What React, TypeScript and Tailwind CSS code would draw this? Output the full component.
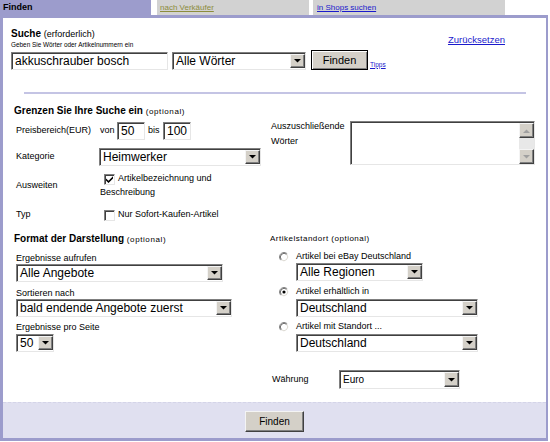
import React from "react";

const sunken =
  "bg-white border border-t-[#7f7f7f] border-l-[#7f7f7f] border-b-[#e6e6e6] border-r-[#e6e6e6] shadow-[inset_1px_1px_0_#404040]";

const raised =
  "bg-[#d4d0c8] border border-t-[#f4f4f4] border-l-[#f4f4f4] border-b-[#404040] border-r-[#404040] shadow-[inset_-1px_-1px_0_#808080]";

function DownArrow({ color = "#000" }: { color?: string }) {
  return (
    <svg width="7" height="4" viewBox="0 0 7 4">
      <path d="M0 0H7L3.5 3.6Z" fill={color} />
    </svg>
  );
}

function UpArrow({ color = "#000" }: { color?: string }) {
  return (
    <svg width="7" height="4" viewBox="0 0 7 4">
      <path d="M3.5 0.4L7 4H0Z" fill={color} />
    </svg>
  );
}

function Field({ value, className }: { value: string; className: string }) {
  return (
    <div className={`flex items-center pl-[3px] text-[12px] leading-none ${sunken} ${className}`}>
      {value}
    </div>
  );
}

function Select({
  value,
  className,
  text = "text-[12px]",
}: {
  value: string;
  className: string;
  text?: string;
}) {
  return (
    <div className={`flex items-stretch ${sunken} ${className}`}>
      <span className={`flex flex-1 items-center pl-[3px] leading-none ${text}`}>{value}</span>
      <span className={`my-[1px] mr-[0px] flex w-[15px] items-center justify-center ${raised}`}>
        <DownArrow />
      </span>
    </div>
  );
}

function TextArea() {
  return (
    <div className={`flex h-[44px] w-[185px] ${sunken}`}>
      <div className="flex-1" />
      <div className="mt-[1px] flex w-[15px] flex-col bg-[#e8e8e8]">
        <span className={`flex h-[15px] items-center justify-center ${raised}`}>
          <UpArrow color="#a0a0a0" />
        </span>
        <div className="flex-1" />
        <span className={`flex h-[15px] items-center justify-center ${raised}`}>
          <DownArrow color="#a0a0a0" />
        </span>
      </div>
    </div>
  );
}

function Check({ checked }: { checked?: boolean }) {
  return (
    <div className={`flex h-[11px] w-[11px] items-center justify-center ${sunken}`}>
      {checked && (
        <svg width="7" height="7" viewBox="0 0 7 7">
          <path d="M0 2.4L2.5 4.8L7 0.3V2.6L2.5 7L0 4.6Z" fill="#000" />
        </svg>
      )}
    </div>
  );
}

function Radio({ on }: { on?: boolean }) {
  return (
    <svg width="10" height="10" viewBox="0 0 12 12">
      <circle cx="6" cy="6" r="5.5" fill="#fff" />
      <path d="M2.11 9.89A5.5 5.5 0 0 1 9.89 2.11" stroke="#808080" strokeWidth="1" fill="none" />
      <path d="M2.82 9.18A4.5 4.5 0 0 1 9.18 2.82" stroke="#404040" strokeWidth="1" fill="none" />
      <path d="M9.18 2.82A4.5 4.5 0 0 1 2.82 9.18" stroke="#d4d0c8" strokeWidth="1" fill="none" />
      {on && <circle cx="6" cy="6" r="1.9" fill="#000" />}
    </svg>
  );
}

export default function App() {
  return (
    <div className="h-[442px] w-[550px] overflow-hidden bg-white font-['Liberation_Sans',Arial,sans-serif] text-black">
      {/* tabs */}
      <div className="flex h-[15px]">
        <div className="flex w-[151px] items-center bg-[#9c9ccc] pl-[3px] text-[9px] font-bold leading-none">
          Finden
        </div>
        <div className="ml-[6px] flex w-[152px] items-center bg-[#d2d2d2] pl-[3px] text-[8px] leading-none">
          <a className="text-[#8c8c3c] underline">nach Verkäufer</a>
        </div>
        <div className="ml-[4px] flex w-[192px] items-center bg-[#d2d2d2] pl-[4px] text-[8px] leading-none">
          <a className="text-[#1a1acc] underline">in Shops suchen</a>
        </div>
      </div>

      <div className="flex h-[426px] w-[548px] flex-col border-[#9c9ccc] border-t-[3px] border-l-[3px] border-r-[2px] border-b-[3px]">
        <div className="h-[384px]">
          {/* Suche */}
          <div className="flex">
            <div className="ml-[8px] flex flex-col">
              <div className="mt-[10px] h-[12px] text-[10px] leading-[12px]">
                <b>Suche</b> <span className="text-[9px]">(erforderlich)</span>
              </div>
              <div className="mt-[1px] h-[8px] text-[6.4px] leading-[8px]">
                Geben Sie Wörter oder Artikelnummern ein
              </div>
              <div className="mt-[1px] flex h-[20px] items-end">
                <Field value="akkuschrauber bosch" className="h-[18px] w-[157px]" />
                <Select value="Alle Wörter" className="ml-[4px] h-[18px] w-[134px]" />
                <button className="ml-[5px] h-[20px] w-[57px] border border-black bg-[#d4d0c8] text-[11px] leading-none shadow-[inset_1px_1px_0_#fff,inset_-1px_-1px_0_#808080]">
                  Finden
                </button>
                <a className="mb-[2px] ml-[2px] text-[6.5px] leading-none text-[#1a1acc] underline">Tipps</a>
              </div>
            </div>
            <a className="mr-[41px] ml-auto mt-[16px] h-[12px] text-[9.5px] leading-[12px] text-[#1a1acc] underline">
              Zurücksetzen
            </a>
          </div>

          <div className="ml-[21px] mt-[22px] h-[2px] w-[502px] bg-[#c4c4e4]" />

          {/* Grenzen */}
          <div className="ml-[11px] mt-[11px] h-[12px] text-[10px] font-bold leading-[12px]">
            Grenzen Sie Ihre Suche ein{" "}
            <span className="text-[8px] font-normal tracking-[0.6px]">(optional)</span>
          </div>
          <div className="flex">
            <div className="ml-[13px] flex w-[255px] flex-col text-[9px]">
              <div className="mt-[5px] flex h-[18px] items-center">
                <span className="w-[84px]">Preisbereich(EUR)</span>
                <span className="w-[17px]">von</span>
                <Field value="50" className="h-[18px] w-[28px]" />
                <span className="ml-[3px] w-[15px]">bis</span>
                <Field value="100" className="h-[18px] w-[28px]" />
              </div>
              <div className="mt-[8px] flex h-[18px] items-center">
                <span className="w-[83px]">Kategorie</span>
                <Select value="Heimwerker" className="h-[18px] w-[162px]" />
              </div>
              <div className="mt-[6px] flex h-[28px] items-center">
                <span className="w-[84px]">Ausweiten</span>
                <div className="flex flex-col">
                  <div className="flex h-[14px] items-center">
                    <span className="ml-[4px]">
                      <Check checked />
                    </span>
                    <span className="ml-[3px]">Artikelbezeichnung und</span>
                  </div>
                  <div className="flex h-[14px] items-center">Beschreibung</div>
                </div>
              </div>
              <div className="mt-[8px] flex h-[14px] items-center">
                <span className="w-[84px]">Typ</span>
                <span className="ml-[4px]">
                  <Check />
                </span>
                <span className="ml-[3px]">Nur Sofort-Kaufen-Artikel</span>
              </div>
            </div>
            <div className="flex">
              <div className="mt-[2px] w-[79px] text-[9px] leading-[15px]">
                Auszuschließende
                <br />
                Wörter
              </div>
              <div className="mt-[4px]">
                <TextArea />
              </div>
            </div>
          </div>

          {/* Format + Standort */}
          <div className="mt-[11px] flex text-[9px]">
            <div className="ml-[11px] flex w-[256px] flex-col">
              <div className="h-[12px] text-[10px] font-bold leading-[12px]">
                Format der Darstellung{" "}
                <span className="text-[8px] font-normal tracking-[0.6px]">(optional)</span>
              </div>
              <div className="ml-[2px] mt-[7px] h-[12px] leading-[12px]">Ergebnisse aufrufen</div>
              <Select value="Alle Angebote" className="ml-[2px] h-[18px] w-[207px]" />
              <div className="ml-[2px] mt-[5px] h-[12px] leading-[12px]">Sortieren nach</div>
              <Select value="bald endende Angebote zuerst" className="ml-[2px] h-[18px] w-[216px]" />
              <div className="ml-[2px] mt-[4px] h-[12px] leading-[12px]">Ergebnisse pro Seite</div>
              <Select value="50" className="ml-[2px] mt-[1px] h-[18px] w-[38px]" />
            </div>
            <div className="flex flex-col">
              <div className="h-[12px] text-[8px] leading-[12px] tracking-[0.5px]">Artikelstandort (optional)</div>
              <div className="mt-[6px] flex h-[12px] items-center">
                <span className="ml-[9px] flex">
                  <Radio />
                </span>
                <span className="ml-[7px]">Artikel bei eBay Deutschland</span>
              </div>
              <Select value="Alle Regionen" className="ml-[26px] h-[18px] w-[127px]" />
              <div className="mt-[5px] flex h-[12px] items-center">
                <span className="ml-[9px] flex">
                  <Radio on />
                </span>
                <span className="ml-[7px]">Artikel erhältlich in</span>
              </div>
              <Select value="Deutschland" className="ml-[26px] mt-[1px] h-[18px] w-[182px]" />
              <div className="mt-[4px] flex h-[12px] items-center">
                <span className="ml-[9px] flex">
                  <Radio />
                </span>
                <span className="ml-[7px]">Artikel mit Standort ...</span>
              </div>
              <Select value="Deutschland" className="ml-[26px] mt-[1px] h-[18px] w-[182px]" />
              <div className="mt-[18px] flex h-[19px] items-center">
                <span className="ml-[2px] w-[67px]">Währung</span>
                <Select value="Euro" className="h-[19px] w-[121px]" text="text-[10px]" />
              </div>
            </div>
          </div>
        </div>

        <footer className="flex flex-1 justify-center border-t border-dashed border-[#d4d4e8] bg-[#e0e0f0] pt-[8px]">
          <button className={`h-[21px] w-[59px] text-[10px] leading-none ${raised}`}>Finden</button>
        </footer>
      </div>
    </div>
  );
}
